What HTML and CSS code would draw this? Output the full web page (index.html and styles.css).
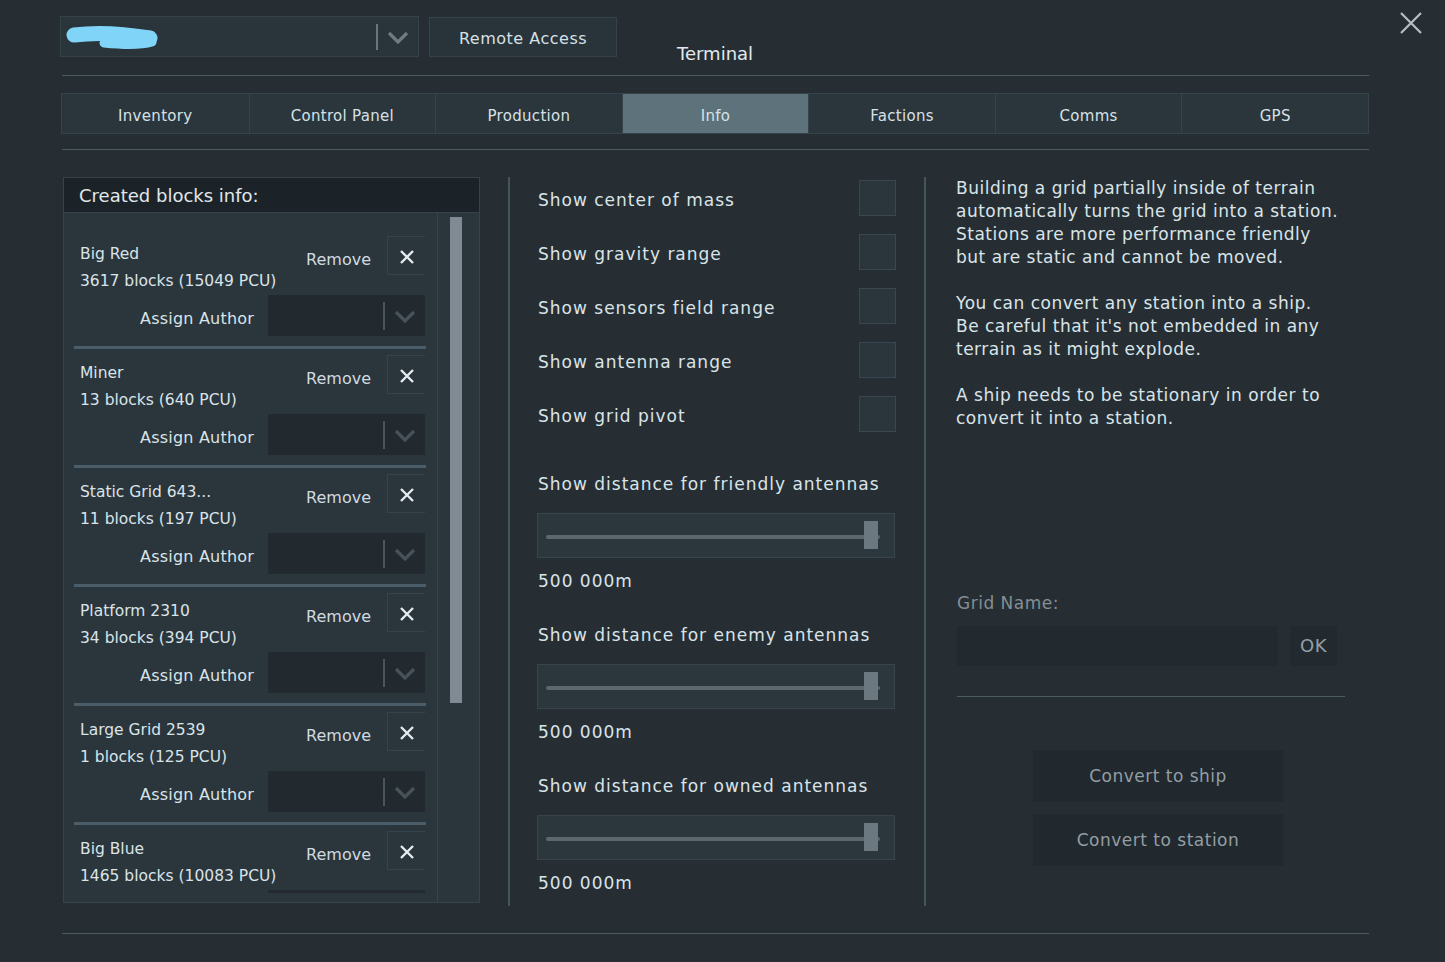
FILE: index.html
```html
<!DOCTYPE html>
<html>
<head>
<meta charset="utf-8">
<title>Terminal</title>
<link rel="stylesheet" href="styles.css">
</head>
<body>
<div class="screen">
  <header class="top">
    <div class="combo">
      <svg class="redact" width="96" height="28" viewBox="0 0 96 28"><path d="M10 11 C 32 8, 62 10, 86 14" stroke="#80d4f7" stroke-width="15" stroke-linecap="round" fill="none"/><path d="M40 19 C 60 21, 78 21, 88 18" stroke="#80d4f7" stroke-width="9" stroke-linecap="round" fill="none"/></svg>
      <span class="combo-sep"></span>
      <svg class="chev" width="22" height="14" viewBox="0 0 22 14"><path d="M2 2 L11 11 L20 2" stroke="#6f7b82" stroke-width="3.2" fill="none"/></svg>
    </div>
    <div class="btn-remote">Remote Access</div>
    <div class="title">Terminal</div>
    <svg class="close" width="24" height="22" viewBox="0 0 24 22"><path d="M2 1 L22 21 M22 1 L2 21" stroke="#b4bec4" stroke-width="2.2"/></svg>
  </header>
  <div class="rule"></div>
  <nav class="tabs">
    <div class="tab">Inventory</div>
    <div class="tab">Control Panel</div>
    <div class="tab">Production</div>
    <div class="tab active">Info</div>
    <div class="tab">Factions</div>
    <div class="tab">Comms</div>
    <div class="tab">GPS</div>
  </nav>
  <div class="rule rule2"></div>

  <main class="content">
    <section class="panel">
      <div class="panel-head">Created blocks info:</div>
      <div class="panel-body">
        <div class="list">
          <div class="item">
            <div class="item-top">
              <div class="info"><div>Big Red</div><div>3617 blocks (15049 PCU)</div></div>
              <div class="actions"><span class="remove">Remove</span><span class="xbox"><svg width="14" height="14" viewBox="0 0 14 14"><path d="M1 1 L13 13 M13 1 L1 13" stroke="#e4ecef" stroke-width="2.4"/></svg></span></div>
            </div>
            <div class="item-author"><span>Assign Author</span><div class="dd"><span class="dd-sep"></span><svg width="22" height="14" viewBox="0 0 22 14"><path d="M2 2 L11 11 L20 2" stroke="#475259" stroke-width="3.2" fill="none"/></svg></div></div>
          </div>
          <div class="item">
            <div class="item-top">
              <div class="info"><div>Miner</div><div>13 blocks (640 PCU)</div></div>
              <div class="actions"><span class="remove">Remove</span><span class="xbox"><svg width="14" height="14" viewBox="0 0 14 14"><path d="M1 1 L13 13 M13 1 L1 13" stroke="#e4ecef" stroke-width="2.4"/></svg></span></div>
            </div>
            <div class="item-author"><span>Assign Author</span><div class="dd"><span class="dd-sep"></span><svg width="22" height="14" viewBox="0 0 22 14"><path d="M2 2 L11 11 L20 2" stroke="#475259" stroke-width="3.2" fill="none"/></svg></div></div>
          </div>
          <div class="item">
            <div class="item-top">
              <div class="info"><div>Static Grid 643...</div><div>11 blocks (197 PCU)</div></div>
              <div class="actions"><span class="remove">Remove</span><span class="xbox"><svg width="14" height="14" viewBox="0 0 14 14"><path d="M1 1 L13 13 M13 1 L1 13" stroke="#e4ecef" stroke-width="2.4"/></svg></span></div>
            </div>
            <div class="item-author"><span>Assign Author</span><div class="dd"><span class="dd-sep"></span><svg width="22" height="14" viewBox="0 0 22 14"><path d="M2 2 L11 11 L20 2" stroke="#475259" stroke-width="3.2" fill="none"/></svg></div></div>
          </div>
          <div class="item">
            <div class="item-top">
              <div class="info"><div>Platform 2310</div><div>34 blocks (394 PCU)</div></div>
              <div class="actions"><span class="remove">Remove</span><span class="xbox"><svg width="14" height="14" viewBox="0 0 14 14"><path d="M1 1 L13 13 M13 1 L1 13" stroke="#e4ecef" stroke-width="2.4"/></svg></span></div>
            </div>
            <div class="item-author"><span>Assign Author</span><div class="dd"><span class="dd-sep"></span><svg width="22" height="14" viewBox="0 0 22 14"><path d="M2 2 L11 11 L20 2" stroke="#475259" stroke-width="3.2" fill="none"/></svg></div></div>
          </div>
          <div class="item">
            <div class="item-top">
              <div class="info"><div>Large Grid 2539</div><div>1 blocks (125 PCU)</div></div>
              <div class="actions"><span class="remove">Remove</span><span class="xbox"><svg width="14" height="14" viewBox="0 0 14 14"><path d="M1 1 L13 13 M13 1 L1 13" stroke="#e4ecef" stroke-width="2.4"/></svg></span></div>
            </div>
            <div class="item-author"><span>Assign Author</span><div class="dd"><span class="dd-sep"></span><svg width="22" height="14" viewBox="0 0 22 14"><path d="M2 2 L11 11 L20 2" stroke="#475259" stroke-width="3.2" fill="none"/></svg></div></div>
          </div>
          <div class="item">
            <div class="item-top">
              <div class="info"><div>Big Blue</div><div>1465 blocks (10083 PCU)</div></div>
              <div class="actions"><span class="remove">Remove</span><span class="xbox"><svg width="14" height="14" viewBox="0 0 14 14"><path d="M1 1 L13 13 M13 1 L1 13" stroke="#e4ecef" stroke-width="2.4"/></svg></span></div>
            </div>
            <div class="item-author"><div class="dd"></div></div>
          </div>
        </div>
        <div class="track"><div class="thumb"></div></div>
      </div>
    </section>

    <div class="vsep"></div>

    <section class="mid">
      <div class="check-row"><span>Show center of mass</span><span class="check"></span></div>
      <div class="check-row"><span>Show gravity range</span><span class="check"></span></div>
      <div class="check-row"><span>Show sensors field range</span><span class="check"></span></div>
      <div class="check-row"><span>Show antenna range</span><span class="check"></span></div>
      <div class="check-row"><span>Show grid pivot</span><span class="check"></span></div>

      <div class="sliders">
        <div class="slider-group">
          <div class="slider-label">Show distance for friendly antennas</div>
          <div class="slider-box"><div class="slider-track"><span class="slider-thumb"></span></div></div>
          <div class="slider-value">500 000m</div>
        </div>
        <div class="slider-group">
          <div class="slider-label">Show distance for enemy antennas</div>
          <div class="slider-box"><div class="slider-track"><span class="slider-thumb"></span></div></div>
          <div class="slider-value">500 000m</div>
        </div>
        <div class="slider-group">
          <div class="slider-label">Show distance for owned antennas</div>
          <div class="slider-box"><div class="slider-track"><span class="slider-thumb"></span></div></div>
          <div class="slider-value">500 000m</div>
        </div>
      </div>
    </section>

    <div class="vsep"></div>

    <section class="right">
      <p class="para">Building a grid partially inside of terrain<br>automatically turns the grid into a station.<br>Stations are more performance friendly<br>but are static and cannot be moved.</p>
      <p class="para">You can convert any station into a ship.<br>Be careful that it's not embedded in any<br>terrain as it might explode.</p>
      <p class="para">A ship needs to be stationary in order to<br>convert it into a station.</p>

      <div class="grid-label">Grid Name:</div>
      <div class="grid-row">
        <div class="grid-input"></div>
        <div class="ok-btn">OK</div>
      </div>
      <div class="right-rule"></div>
      <div class="convert">Convert to ship</div>
      <div class="convert">Convert to station</div>
    </section>
  </main>

  <div class="rule rule3"></div>
</div>
</body>
</html>
```

FILE: styles.css
```css
* { box-sizing: border-box; }

html, body {
  margin: 0;
  padding: 0;
  background: #262e34;
}

body {
  font-family: "DejaVu Sans", "Liberation Sans", sans-serif;
  color: #d9e4e9;
}

.screen {
  width: 1445px;
  height: 962px;
  background: #262e34;
  overflow: hidden;
}

/* Header */
.top {
  height: 75px;
  display: flex;
  align-items: flex-start;
  padding: 16px 0 0 60px;
}

.combo {
  width: 359px;
  height: 41px;
  background: #2a343b;
  border: 1px solid #36424a;
  display: flex;
  align-items: center;
  padding-left: 3px;
}

.redact { display: block; margin-top: 2px; }

.combo-sep {
  width: 2px;
  height: 26px;
  background: #6b777e;
  margin-left: auto;
}

.chev { margin: 2px 9px 0 9px; display: block; }

.btn-remote {
  width: 188px;
  height: 40px;
  margin: 1px 0 0 10px;
  background: #29333a;
  border: 1px solid #36424a;
  font-size: 16px;
  letter-spacing: 0.5px;
  line-height: 35px;
  padding-top: 3px;
  text-align: center;
  color: #d6e1e6;
}

.title {
  margin: 26px 0 0 60px;
  font-size: 18px;
  line-height: 24px;
  color: #e2eaee;
}

.close {
  display: block;
  margin: -4px 22px 0 auto;
}

.rule {
  height: 1px;
  background: #4c5b64;
  margin: 0 76px 0 62px;
}

/* Tabs */
.tabs {
  display: grid;
  grid-template-columns: repeat(7, 1fr);
  margin: 17px 76px 0 61px;
  height: 41px;
  border: 1px solid #36434b;
  background: #2b353c;
}

.tab {
  border-left: 1px solid #36434b;
  font-size: 15px;
  line-height: 33px;
  padding-top: 6px;
  text-align: center;
  letter-spacing: 0.3px;
  color: #d6e1e6;
}

.tab:first-child { border-left: none; }

.tab.active { background: #5d727a; }

.rule2 { margin-top: 15px; }

/* Content */
.content {
  display: flex;
  margin-top: 27px;
  padding-left: 63px;
  height: 729px;
}

.vsep {
  width: 2px;
  background: #46545c;
  margin-left: 28px;
  height: 729px;
}

/* Left panel */
.panel {
  width: 417px;
  height: 726px;
  border: 1px solid #36434b;
  background: #2b353c;
  display: flex;
  flex-direction: column;
}

.panel-head {
  height: 35px;
  background: #1c2328;
  border-bottom: 1px solid #36434b;
  font-size: 18px;
  line-height: 33px;
  padding: 1px 0 0 15px;
  color: #e0e8ec;
}

.panel-body {
  flex: 1;
  display: flex;
  min-height: 0;
}

.list {
  width: 373px;
  padding: 17px 11px 0 10px;
  margin-bottom: 9px;
  overflow: hidden;
}

.item {
  height: 119px;
  border-bottom: 3px solid #4a5d68;
}

.item-top {
  height: 65px;
  display: flex;
  justify-content: space-between;
  align-items: flex-start;
}

.info {
  padding: 11px 0 0 6px;
  font-size: 15.5px;
  line-height: 27px;
  white-space: nowrap;
}

.actions {
  display: flex;
  align-items: center;
  margin: 6px 1px 0 0;
}

.remove {
  font-size: 16px;
  padding-top: 7px;
  margin-right: 16px;
  color: #d0dbe0;
}

.xbox {
  width: 38px;
  height: 39px;
  border: 1px solid #36434b;
  border-right: none;
  display: flex;
  align-items: center;
  justify-content: center;
}

.xbox svg { display: block; margin-top: 2px; }

.item-author {
  display: flex;
  justify-content: flex-end;
  align-items: center;
  gap: 14px;
  height: 41px;
  margin-right: 1px;
  font-size: 16px;
  letter-spacing: 0.2px;
}

.item-author > span { padding-top: 5px; }

.dd {
  width: 157px;
  height: 41px;
  background: #222a30;
  display: flex;
  align-items: center;
  justify-content: flex-end;
}

.dd-sep {
  width: 2px;
  height: 28px;
  background: #4a555c;
}

.dd svg { display: block; margin: 2px 9px 0 9px; }

.track {
  width: 42px;
  border-left: 1px solid #36434b;
  padding: 4px 0 0 12px;
}

.thumb {
  width: 12px;
  height: 486px;
  background: #7f8a92;
}

/* Middle column */
.mid {
  width: 386px;
  padding: 3px 0 0 28px;
  font-size: 17px;
  letter-spacing: 1px;
}

.check-row {
  height: 36px;
  margin-bottom: 18px;
  display: flex;
  justify-content: space-between;
  align-items: center;
}

.check-row > span:first-child { padding-top: 3px; }

.check {
  width: 37px;
  height: 36px;
  background: #2b353c;
  border: 1px solid #3a4750;
}

.sliders { padding-top: 22px; }

.slider-group { margin-bottom: 30px; }

.slider-label,
.slider-value {
  line-height: 24px;
  white-space: nowrap;
}

.slider-box {
  margin: 17px 0 0 -1px;
  width: 358px;
  height: 45px;
  background: #2c363d;
  border: 1px solid #37444c;
  padding: 0 14px 0 8px;
  display: flex;
  align-items: center;
}

.slider-track {
  flex: 1;
  height: 4px;
  border-radius: 2px;
  background: #5c6870;
  position: relative;
  margin-top: 3px;
}

.slider-thumb {
  position: absolute;
  right: 2px;
  top: -14px;
  width: 14px;
  height: 28px;
  background: #6c7880;
}

.slider-value { margin-top: 9px; padding-top: 2px; }

/* Right column */
.right {
  width: 420px;
  padding-left: 30px;
  font-size: 17px;
  letter-spacing: 0.5px;
}

.para {
  margin: 0 0 23px 0;
  line-height: 23px;
  white-space: nowrap;
}

.grid-label {
  margin-top: 161px;
  line-height: 24px;
  color: #848f96;
  padding-left: 1px;
}

.grid-row {
  display: flex;
  margin-top: 11px;
  padding-left: 1px;
}

.grid-input {
  width: 321px;
  height: 40px;
  background: #222a2f;
}

.ok-btn {
  width: 47px;
  height: 40px;
  margin-left: 12px;
  background: #222a2f;
  color: #949fa5;
  font-size: 18px;
  line-height: 40px;
  text-align: center;
}

.right-rule {
  width: 388px;
  height: 1px;
  margin: 30px 0 0 1px;
  background: #4c5b64;
}

.convert {
  width: 250px;
  height: 52px;
  margin: 53px 0 0 77px;
  background: #21292e;
  color: #939ea4;
  line-height: 52px;
  text-align: center;
}

.convert + .convert { margin-top: 12px; }

.rule3 { margin-top: 27px; }
```
